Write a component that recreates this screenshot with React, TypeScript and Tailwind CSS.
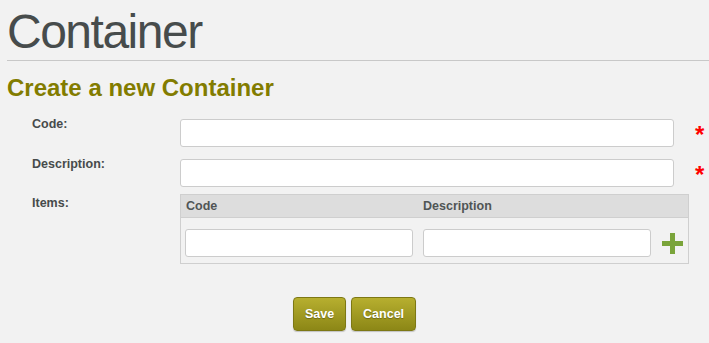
const font = { fontFamily: '"Liberation Sans", Arial, sans-serif' };

const Plus = () => (
    <svg width="21" height="21" viewBox="0 0 21 21">
        <rect x="8" y="0" width="5" height="21" fill="#7aa43a" />
        <rect x="0" y="8" width="21" height="5" fill="#7aa43a" />
    </svg>
);

const Field = ({ label, top }: { label: string; top: string }) => (
    <div className={`flex items-start ${top}`}>
        <label className="w-[173px] pl-[25px] text-[12.5px] leading-[15px] font-bold text-[#474b4b]">{label}</label>
        <input
            type="text"
            className="mt-[2px] h-[28px] w-[494px] rounded-[3px] border border-[#cccccc] bg-white px-2 outline-none"
        />
        <span className="ml-[21px] mt-[6px] text-[24px] leading-[24px] font-bold text-[#ff0000]">*</span>
    </div>
);

const App = () => {
    return (
        <div className="min-h-screen w-full bg-[#f2f2f2] pl-[7px]" style={font}>
            <h1 className="pt-[8px] text-[48px] leading-[48px] tracking-[-1.5px] text-[#474c4c]">Container</h1>
            <div className="mt-[4px] border-t border-[#c8c8c8]" />
            <h2 className="mt-[15px] text-[24px] leading-[24px] font-bold text-[#827c00]">Create a new Container</h2>

            <Field label="Code:" top="mt-[17px]" />
            <Field label="Description:" top="mt-[10px]" />

            <div className="mt-[7px] flex items-start">
                <label className="mt-[2px] w-[173px] pl-[25px] text-[12.5px] leading-[15px] font-bold text-[#474b4b]">Items:</label>
                <div className="w-[509px] border border-[#cfcfcf]">
                    <div className="grid h-[23px] grid-cols-[237px_238px_32px] items-center border-b border-[#cfcfcf] bg-[#dddddd] text-[12.5px] font-bold text-[#505555]">
                        <span className="pl-[5px]">Code</span>
                        <span className="pl-[5px]">Description</span>
                        <span />
                    </div>
                    <div className="grid grid-cols-[237px_238px_32px] items-center pt-[11px] pb-[6px]">
                        <div className="pl-[4px] pr-[5px]">
                            <input type="text" className="h-[28px] w-full rounded-[3px] border border-[#cccccc] bg-white px-2 outline-none" />
                        </div>
                        <div className="pl-[5px] pr-[5px]">
                            <input type="text" className="h-[28px] w-full rounded-[3px] border border-[#cccccc] bg-white px-2 outline-none" />
                        </div>
                        <div className="flex justify-center">
                            <Plus />
                        </div>
                    </div>
                </div>
            </div>

            <div className="mt-[33px] flex justify-center gap-[5px] pr-[7px]">
                <button className="h-[34px] rounded-[4px] border border-[#7d7814] bg-gradient-to-b from-[#b7af2f] to-[#8c8716] px-[11px] text-[12.5px] font-bold text-white shadow-[0_1px_1px_rgba(0,0,0,0.2)] [text-shadow:0_1px_1px_rgba(0,0,0,0.3)]">
                    Save
                </button>
                <button className="h-[34px] rounded-[4px] border border-[#7d7814] bg-gradient-to-b from-[#b7af2f] to-[#8c8716] px-[11px] text-[12.5px] font-bold text-white shadow-[0_1px_1px_rgba(0,0,0,0.2)] [text-shadow:0_1px_1px_rgba(0,0,0,0.3)]">
                    Cancel
                </button>
            </div>
        </div>
    );
};

export default App;
